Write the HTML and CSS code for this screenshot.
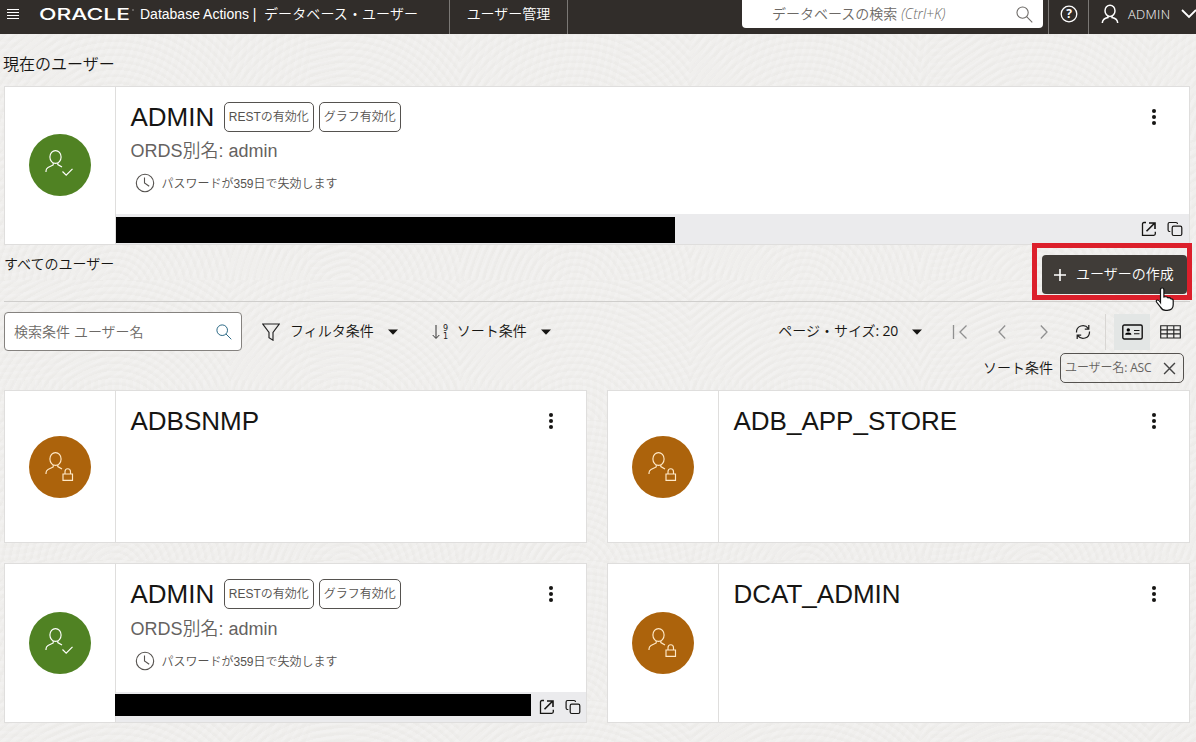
FILE: index.html
```html
<!DOCTYPE html>
<html lang="ja">
<head>
<meta charset="utf-8">
<title>Database Actions</title>
<link rel="stylesheet" href="styles.css">
</head>
<body>
<svg class="defs" width="0" height="0" aria-hidden="true">
  <symbol id="search" viewBox="0 0 16 16"><g fill="none" stroke="currentColor"><circle cx="6.2" cy="6.2" r="5.3"/><path d="M10 10l5.3 5.3"/></g></symbol>
  <symbol id="person" viewBox="0 0 32 32"><g fill="none" stroke="currentColor" stroke-width="1.15"><ellipse cx="11.5" cy="7" rx="5.6" ry="6.4"/><path d="M9.2 13v2L4 17.4Q2 18.5 2 21v1M13.800 13v1.600L18 17"/></g></symbol>
  <symbol id="check" viewBox="0 0 32 32"><path d="M18.500 21.500l3.700 3.700 6.300-6.300" fill="none" stroke="currentColor" stroke-width="1.200"/></symbol>
  <symbol id="lock" viewBox="0 0 32 32"><path d="M19 22h9.500v6.300H19zM21 22v-2.300c0-4 5.500-4 5.500 0V22" fill="none" stroke="currentColor" stroke-width="1.150"/></symbol>
  <symbol id="clock" viewBox="0 0 20 20"><g fill="none" stroke="currentColor" stroke-width="1.100"><circle cx="10" cy="10" r="8.700"/><path d="M9.500 4.500V10l4.700 3.300"/></g></symbol>
  <symbol id="open" viewBox="0 0 16 16"><g fill="none" stroke="currentColor" stroke-width="1.300"><path d="M5 1.500H3Q1.500 1.500 1.500 3v11.300h11.300q1.500 0 1.500-1.500v-2"/><path d="M5.500 10.300l8-8M8 2h6v6" stroke-width="1.600"/></g></symbol>
  <symbol id="copy" viewBox="0 0 16 16"><g fill="none" stroke="currentColor" stroke-width="1.200"><rect x="5.200" y="5.200" width="9.600" height="9.300" rx="1.500"/><path d="M3.300 10.500H2.500Q1.100 10.500 1.100 9V3Q1.100 1.500 2.500 1.500H9Q10.500 1.500 10.500 3"/></g></symbol>
  <symbol id="caret" viewBox="0 0 10 6"><path d="M0 .5h10L5 5.700z" fill="currentColor"/></symbol>
  <symbol id="dots" viewBox="0 0 6 18"><g fill="currentColor"><circle cx="3" cy="3" r="2.050"/><circle cx="3" cy="9" r="2.050"/><circle cx="3" cy="15" r="2.050"/></g></symbol>
</svg>

<header class="topbar">
  <svg class="menu" width="12" height="11" viewBox="0 0 12 11"><path d="M0 .5h12M0 3.500h12M0 6.500h12M0 9.500h12" stroke="#fff"/></svg>
  <svg class="logo" width="96" height="20" viewBox="0 0 96 20"><text x="0" y="16" textLength="91" lengthAdjust="spacingAndGlyphs">ORACLE</text><circle cx="94" cy="6" r=".7" fill="#bbb"/></svg>
  <span class="product">Database Actions |</span>
  <span class="page-name">データベース・ユーザー</span>
  <span class="tab">ユーザー管理</span>
  <div class="global-search"><span>データベースの検索 <i>(Ctrl+K)</i></span><svg width="17" height="17"><use href="#search"/></svg></div>
  <div class="help"><svg width="18" height="18" viewBox="0 0 18 18"><circle cx="9" cy="9" r="7.800" fill="none" stroke="#fff" stroke-width="1.300"/><text x="9" y="13.300" text-anchor="middle">?</text></svg></div>
  <div class="account">
    <svg width="18" height="20" viewBox="0 0 18 20"><g fill="none" stroke="#fff" stroke-width="1.500"><ellipse cx="9" cy="6.800" rx="5" ry="5.600"/><path d="M7 12v1.500Q1.500 14.500 1.300 19M11 12v1.500q5.500 1 5.700 5.500"/></g></svg>
    <span>ADMIN</span>
    <svg width="16" height="10" viewBox="0 0 16 10"><path d="M1 1l7 7 7-7" fill="none" stroke="#fff" stroke-width="1.800"/></svg>
  </div>
</header>

<main class="content">
  <h2 class="current-title">現在のユーザー</h2>
  <article class="card current">
    <div class="side"><span class="avatar green"><svg width="32" height="32"><use href="#person"/><use href="#check"/></svg></span></div>
    <div class="main">
      <div class="info">
        <div class="name-row"><h3>ADMIN</h3><span class="tag">RESTの有効化</span><span class="tag">グラフ有効化</span><svg class="dots" width="6" height="18"><use href="#dots"/></svg></div>
        <p class="alias">ORDS別名: admin</p>
        <p class="expiry"><svg width="20" height="20"><use href="#clock"/></svg><span>パスワードが359日で失効します</span></p>
      </div>
      <div class="links"><span class="mask"></span><svg width="16" height="16"><use href="#open"/></svg><svg width="16" height="16"><use href="#copy"/></svg></div>
    </div>
  </article>

  <div class="all-head">
    <h2>すべてのユーザー</h2>
    <div class="create-wrap">
      <button class="create"><svg width="12" height="13" viewBox="0 0 12 13"><path d="M6 1v12M0 7h12" stroke="#fff" stroke-width="1.600"/></svg><span>ユーザーの作成</span></button>
      <span class="highlight"></span>
      <svg class="pointer" width="20" height="25" viewBox="0 0 20 25"><path d="M5.500 15.500V3q0-2 1.700-2t1.700 2v7q3-.8 4 .8 2.200-.5 3 1 2.300-.2 2.300 2v4q0 5.500-6 5.500h-1.500q-3.500 0-5.200-3.200L1.500 15q-.7-2 1-2 1.500 0 3 2.500z" fill="#fff" stroke="#111" stroke-width="1.200"/></svg>
    </div>
  </div>

  <div class="toolbar">
    <div class="search-box"><span>検索条件 ユーザー名</span><svg width="16" height="16"><use href="#search"/></svg></div>
    <div class="filter"><svg width="18" height="18" viewBox="0 0 18 18"><path d="M.8 1h16.400L11 9.500v7.700l-4-2.500V9.500z" fill="none" stroke="#222" stroke-width="1.150"/></svg><span>フィルタ条件</span><svg class="caret" width="10" height="6"><use href="#caret"/></svg></div>
    <div class="sort"><svg width="17" height="16" viewBox="0 0 17 16"><path d="M4 1v13M.7 11L4 14.500 7.300 11" fill="none" stroke="#333"/><text x="11" y="7">9</text><text x="11" y="15">1</text></svg><span>ソート条件</span><svg class="caret" width="10" height="6"><use href="#caret"/></svg></div>
    <div class="pager">
      <span class="size">ページ・サイズ<span class="latin">: 20</span></span><svg class="caret" width="10" height="6"><use href="#caret"/></svg>
      <svg class="first" width="16" height="14" viewBox="0 0 16 14"><path d="M1.500 0v14M14.500 .5L8 7l6.500 6.500" fill="none" stroke="#909090" stroke-width="1.300"/></svg>
      <svg class="prev" width="8" height="14" viewBox="0 0 8 14"><path d="M7.200.5L1 7l6.200 6.500" fill="none" stroke="#909090" stroke-width="1.300"/></svg>
      <svg class="next" width="8" height="14" viewBox="0 0 8 14"><path d="M.8.5L7 7 .8 13.500" fill="none" stroke="#909090" stroke-width="1.300"/></svg>
      <svg class="refresh" width="16" height="16" viewBox="0 0 16 16"><path d="M1.500 8.500C1.200 1.500 9.500-.5 13.300 4.300M13.800 1v4H9.800M14.500 7.500C14.800 14.500 6.500 16.500 2.700 11.700M2.200 15v-4H6.200" fill="none" stroke="#222" stroke-width="1.250"/></svg>
    </div>
    <div class="views">
      <span class="view active"><svg width="21" height="16" viewBox="0 0 21 16"><rect x=".8" y="1" width="19.400" height="14" rx="1.500" fill="none" stroke="#111" stroke-width="1.400"/><circle cx="6.300" cy="5.900" r="1.700"/><path d="M3.200 10.800Q3.200 8.500 6.300 8.500t3.100 2.300z"/><path d="M12 6.500h5.500M12 9.800h5.500" stroke="#111" stroke-width="1.100"/></svg></span>
      <span class="view"><svg width="21" height="14" viewBox="0 0 21 14"><path d="M.7.700h19.600v12.300H.7zM.7 4.800h19.600M.7 8.900h19.600M7.200.7V13M13.800.7V13" fill="none" stroke="#222" stroke-width="1.150"/></svg></span>
    </div>
  </div>
  <div class="sort-row"><span>ソート条件</span><span class="chip"><span>ユーザー名<span class="latin">: ASC</span></span><svg width="13" height="13" viewBox="0 0 12 12"><path d="M1 1l10 10M11 1L1 11" stroke="#444" stroke-width="1.300"/></svg></span></div>

  <section class="users">
    <article class="card short">
      <div class="side"><span class="avatar orange"><svg width="32" height="32"><use href="#person"/><use href="#lock"/></svg></span></div>
      <div class="main"><div class="info"><div class="name-row"><h3>ADBSNMP</h3><svg class="dots" width="6" height="18"><use href="#dots"/></svg></div></div></div>
    </article>
    <article class="card short">
      <div class="side"><span class="avatar orange"><svg width="32" height="32"><use href="#person"/><use href="#lock"/></svg></span></div>
      <div class="main"><div class="info"><div class="name-row"><h3>ADB_APP_STORE</h3><svg class="dots" width="6" height="18"><use href="#dots"/></svg></div></div></div>
    </article>
    <article class="card listed">
      <div class="side"><span class="avatar green"><svg width="32" height="32"><use href="#person"/><use href="#check"/></svg></span></div>
      <div class="main">
        <div class="info">
          <div class="name-row"><h3>ADMIN</h3><span class="tag">RESTの有効化</span><span class="tag">グラフ有効化</span><svg class="dots" width="6" height="18"><use href="#dots"/></svg></div>
          <p class="alias">ORDS別名: admin</p>
          <p class="expiry"><svg width="20" height="20"><use href="#clock"/></svg><span>パスワードが359日で失効します</span></p>
        </div>
        <div class="links"><span class="mask"></span><svg width="16" height="16"><use href="#open"/></svg><svg width="16" height="16"><use href="#copy"/></svg></div>
      </div>
    </article>
    <article class="card">
      <div class="side"><span class="avatar orange"><svg width="32" height="32"><use href="#person"/><use href="#lock"/></svg></span></div>
      <div class="main"><div class="info"><div class="name-row"><h3>DCAT_ADMIN</h3><svg class="dots" width="6" height="18"><use href="#dots"/></svg></div></div></div>
    </article>
  </section>
</main>
</body>
</html>
```

FILE: styles.css
```css
* { box-sizing: border-box; }
body {
  margin: 0;
  width: 1196px;
  height: 742px;
  overflow: hidden;
  font: 350 14px/20px "Liberation Sans", "Noto Sans CJK JP", sans-serif;
  color: #161513;
  background-color: #f0efed;
  background-image:
    repeating-radial-gradient(circle at 50% 110%, rgba(100, 90, 80, .022) 0 2px, transparent 4px 7px),
    repeating-radial-gradient(circle at 0 0, rgba(255, 255, 255, .14) 0 2px, transparent 4px 7px);
  background-size: 230px 140px, 310px 190px;
  white-space: nowrap;
}
h2, h3, p { margin: 0; font-weight: 350; }
svg { display: block; flex: none; }
.defs { position: absolute; }
.latin { font-family: "Open Sans", sans-serif; font-weight: 400; letter-spacing: -.2px; }

.topbar { display: flex; align-items: center; height: 34px; background: #312d2a; color: #fff; padding-bottom: 6px; }
.topbar > * { flex: none; }
.menu { margin-left: 7px; }
.logo { margin-left: 20px; overflow: visible; }
.logo text { font: 500 16px Inter, sans-serif; fill: #fff; }
.product { margin-left: 5px; width: 124px; }
.page-name { width: 185px; letter-spacing: .1px; }
.tab { display: flex; align-items: center; justify-content: center; width: 119px; height: 34px; margin-bottom: -6px; padding-bottom: 6px; border: solid #7b7875; border-width: 0 1px; }
.global-search { display: flex; align-items: center; justify-content: space-between; width: 301px; height: 28px; margin: 0 0 0 174px; padding: 0 10px 0 30px; background: #fff; color: #6c6966; border-radius: 0 0 4px 4px; }
.global-search i { font-family: "Open Sans", sans-serif; font-size: 14px; }
.help { display: flex; align-items: center; justify-content: center; width: 41px; height: 34px; margin: 0 0 -6px 5px; padding-bottom: 6px; border: solid #7b7875; border-width: 0 1px; }
.help text { font: 700 12px "Open Sans", sans-serif; fill: #fff; }
.account { display: flex; align-items: center; margin-left: 12px; font: 300 13px/20px "Open Sans", sans-serif; }
.account span { width: 53px; margin-left: 9px; letter-spacing: .3px; }

.content { padding: 0 6px 0 4px; }
.current-title { height: 52px; padding-top: 21px; font-size: 16px; text-indent: -1px; }
.card { display: flex; height: 160px; background: #fff; border: 1px solid #dfdedd; }
.current { height: 159px; }
.short { height: 153px; }
.side { display: flex; align-items: center; justify-content: center; flex: none; width: 111px; border-right: 1px solid #dfdedd; }
.current .side { padding-bottom: 1px; }
.avatar { display: flex; width: 62px; height: 62px; border-radius: 50%; color: #fff; padding: 16px 0 0 15px; }
.green { background: #508223; }
.orange { background: #ac630c; color: #ffe9c8; }
.main { flex: 1; min-width: 0; display: flex; flex-direction: column; }
.info { flex: 1; padding: 15px 0 0 14.5px; }
.name-row { display: flex; align-items: center; height: 30px; gap: 5px; }
.name-row h3 { font-size: 26px; line-height: 30px; margin-right: 4.5px; }
.tag { height: 30px; padding: 0 4px; border: 1px solid #55524f; border-radius: 5px; font-size: 12px; line-height: 28px; color: #55524f; }
.dots { margin-left: auto; margin-right: 32px; }
.alias { margin-top: 6px; font-size: 18px; line-height: 26px; color: #65625f; }
.expiry { display: flex; align-items: center; gap: 7px; height: 20px; margin: 9px 0 0 4px; font-size: 12px; color: #55524f; }
.expiry span { padding-top: 2px; }
.listed .alias { margin-top: 7px; }
.links { display: flex; align-items: center; height: 30px; background: #ebebed; padding-right: 6px; gap: 10px; }
.mask { flex: none; width: 559px; height: 26px; margin: 2px auto 0 0; background: #000; }
.listed .mask { width: 416px; height: 22px; margin: -4px -2px 0 -1px; }

.all-head { display: flex; justify-content: space-between; height: 57px; border-bottom: 1px solid #cfcecc; }
.all-head h2 { padding-top: 9px; font-size: 14px; }
.create-wrap { position: relative; padding: 10px 3px 0 0; }
.create { display: flex; align-items: center; gap: 10px; width: 145px; height: 39px; padding: 0 0 0 12px; border: 0; border-radius: 4px; background: #403c38; color: #fff; font: inherit; }
.create span { padding-bottom: 2px; }
.highlight { position: absolute; left: -10px; top: -2px; width: 160px; height: 57px; border: 5px solid #dc1f2b; }
.pointer { position: absolute; left: 113px; top: 42px; }

.toolbar { display: flex; align-items: center; height: 39px; margin-top: 10px; }
.search-box { display: flex; align-items: center; justify-content: space-between; width: 238px; height: 39px; padding: 0 9px 0 9px; background: #fff; border: 1px solid #85827f; border-radius: 4px; color: #6c6966; }
.search-box svg { color: #2c6a86; }
.filter, .sort { display: flex; align-items: center; }
.filter { margin-left: 20px; }
.filter span { margin-left: 10px; padding-bottom: 2px; }
.caret { margin-left: 14px; }
.sort { margin-left: 34px; }
.sort span { margin-left: 8px; padding-bottom: 2px; }
.sort text { font: 8px "DejaVu Sans", sans-serif; fill: #222; }
.pager { display: flex; align-items: center; margin-left: auto; }
.size { padding-bottom: 2px; }
.first { margin-left: 30px; }
.prev { margin-left: 30px; }
.next { margin-left: 34px; }
.refresh { margin-left: 27px; }
.views { display: flex; height: 36px; margin-left: 14px; padding-left: 8px; border-left: 1px solid #d8d6d3; }
.view { display: flex; align-items: center; justify-content: center; width: 40px; }
.view.active { width: 36px; background: #e3e6e5; }
.sort-row { display: flex; align-items: center; justify-content: flex-end; gap: 7px; height: 30px; margin-top: 2px; padding-right: 6px; }
.chip { display: flex; align-items: center; justify-content: space-between; width: 124px; height: 30px; padding: 0 7px 0 4px; border: 1px solid #55524f; border-radius: 5px; font-size: 12px; letter-spacing: -.1px; color: #65625f; }
.users { display: grid; grid-template-columns: 583px 583px; gap: 20px; margin-top: 7px; }
```
